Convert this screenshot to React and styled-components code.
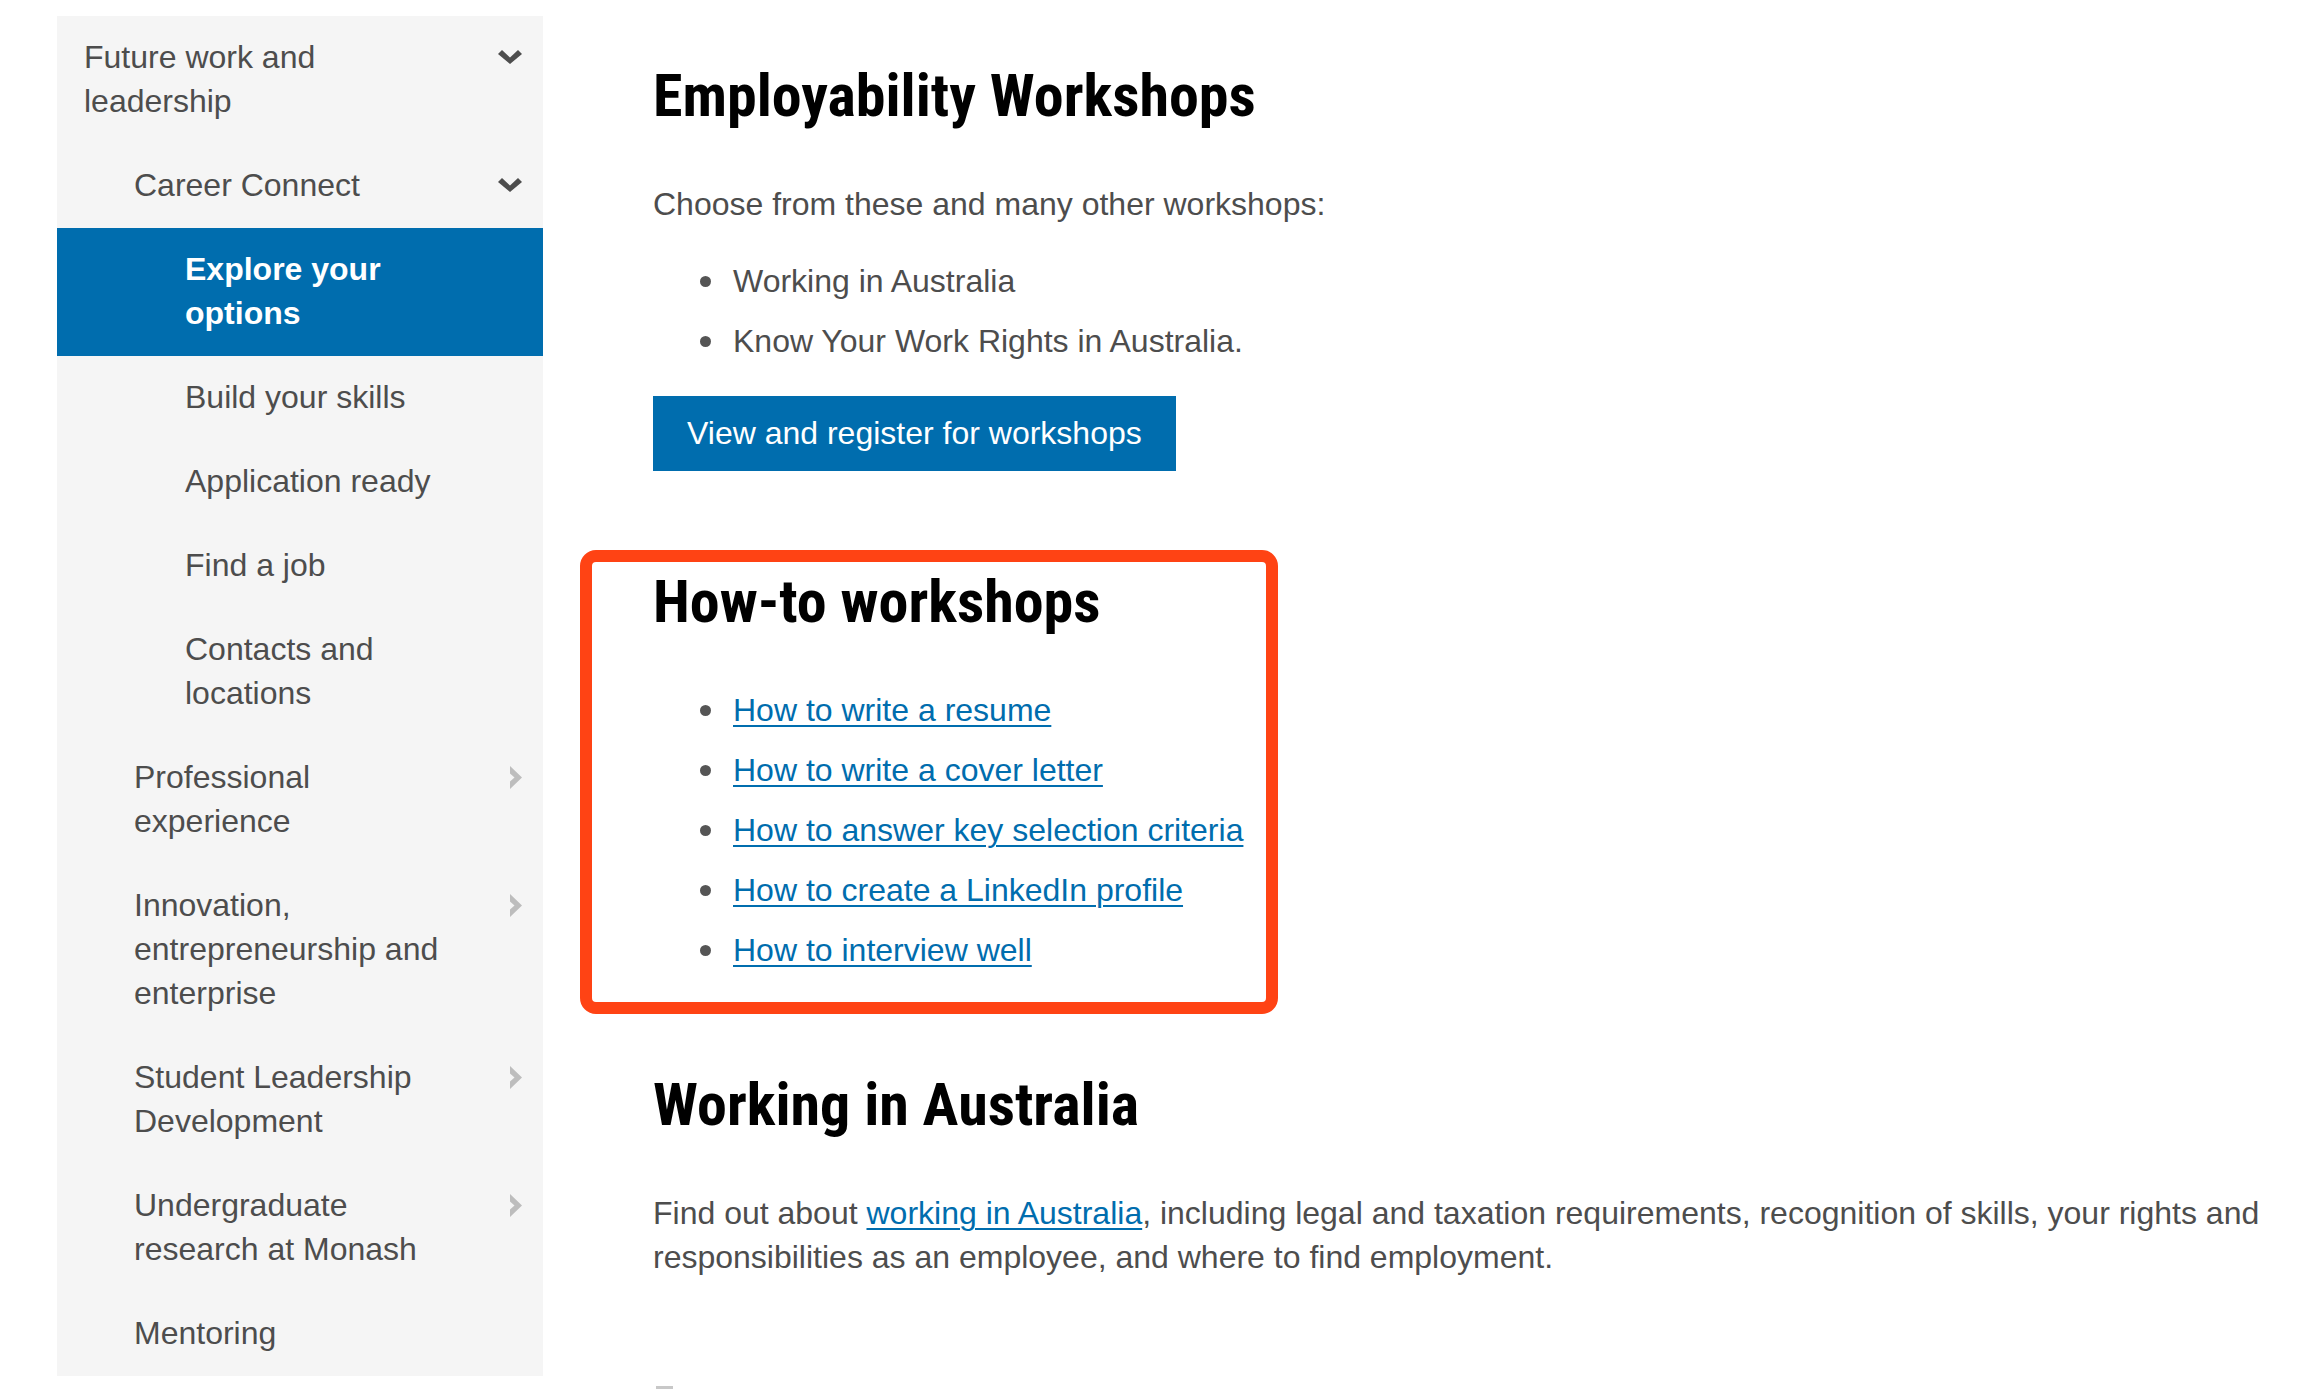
import React from 'react'
import styled, { createGlobalStyle } from 'styled-components'

const GlobalStyle = createGlobalStyle`
  html, body {
    margin: 0;
    padding: 0;
    background: #fff;
  }
  body {
    font-family: 'Liberation Sans', Arial, Helvetica, sans-serif;
    color: #4d4d4d;
  }
`

const Page = styled.div`
  display: flex;
  align-items: flex-start;
  padding: 16px 0 0 57px;
`

const Sidebar = styled.nav`
  width: 486px;
  flex: none;
  background: #f5f5f5;
`

const NavItem = styled.a`
  display: flex;
  align-items: flex-start;
  padding: 19px 21px 21px ${p => p.indent}px;
  font-size: 32px;
  line-height: 44px;
  text-decoration: none;
  cursor: pointer;
  color: ${p => (p.active ? '#fff' : '#4d4d4d')};
  background: ${p => (p.active ? '#006dae' : 'transparent')};
  font-weight: ${p => (p.active ? 700 : 400)};
`

const NavLabel = styled.span`
  flex: 1;
`

const Toggle = styled.span`
  width: 70px;
  height: 44px;
  flex: none;
  display: flex;
  align-items: center;
  justify-content: flex-end;
`

const Main = styled.main`
  flex: 1;
  padding: 0 40px 0 110px;
`

const Heading = styled.h2`
  margin: ${p => p.top || 0}px 0 48px;
  font-family: 'Roboto Condensed', 'Liberation Sans Narrow', 'DejaVu Sans Condensed', sans-serif;
  font-weight: 700;
  font-size: 60px;
  line-height: 76px;
  color: #000;
`

const Text = styled.p`
  margin: 0 0 33px;
  font-size: 32px;
  line-height: 44px;
  color: #4d4d4d;
`

const List = styled.ul`
  list-style: none;
  margin: 0 0 ${p => p.bottom}px;
  padding: 0 0 0 47px;
  display: flex;
  flex-direction: column;
  gap: 16px;
`

const Item = styled.li`
  display: flex;
  font-size: 32px;
  line-height: 44px;
  color: #4d4d4d;

  &::before {
    content: '';
    flex: none;
    width: 11px;
    height: 11px;
    margin: 17px 22px 0 0;
    border-radius: 50%;
    background: #555;
  }
`

const Link = styled.a`
  color: #006dae;
  text-decoration: underline;
  text-decoration-thickness: 2px;
  text-underline-offset: 4px;
  cursor: pointer;
`

const Button = styled.a`
  display: inline-block;
  height: 75px;
  padding: 0 34px;
  background: #006dae;
  color: #fff;
  font-size: 32px;
  line-height: 75px;
  text-decoration: none;
  cursor: pointer;
`

const Highlighted = styled.section`
  position: relative;
  margin-top: 93px;

  &::after {
    content: '';
    position: absolute;
    top: -14px;
    left: -73px;
    bottom: -42px;
    width: 698px;
    box-sizing: border-box;
    border: 12px solid #ff4314;
    border-radius: 16px;
    pointer-events: none;
  }
`

const Stub = styled.div`
  width: 17px;
  height: 3px;
  margin-top: 107px;
  margin-left: 3px;
  background: #c8c8c8;
`

const ChevronDown = () => (
  <svg width="24" height="14" viewBox="0 0 24 14">
    <polygon points="0,4 4,0 12,7.5 20,0 24,4 12,14" fill="#4d4d4d" />
  </svg>
)

const ChevronRight = () => (
  <svg width="12" height="23" viewBox="0 0 12 23">
    <polygon points="0,0 12,11.5 0,23 0,15.5 4.5,11.5 0,7.5" fill="#bdbdbd" />
  </svg>
)

const navItems = [
  { label: 'Future work and leadership', level: 0, toggle: 'down' },
  { label: 'Career Connect', level: 1, toggle: 'down' },
  { label: 'Explore your options', level: 2, active: true },
  { label: 'Build your skills', level: 2 },
  { label: 'Application ready', level: 2 },
  { label: 'Find a job', level: 2 },
  { label: 'Contacts and locations', level: 2 },
  { label: 'Professional experience', level: 1, toggle: 'right' },
  { label: 'Innovation, entrepreneurship and enterprise', level: 1, toggle: 'right' },
  { label: 'Student Leadership Development', level: 1, toggle: 'right' },
  { label: 'Undergraduate research at Monash', level: 1, toggle: 'right' },
  { label: 'Mentoring', level: 1 },
]

const indents = [27, 77, 128]

const howTo = [
  'How to write a resume',
  'How to write a cover letter',
  'How to answer key selection criteria',
  'How to create a LinkedIn profile',
  'How to interview well',
]

export default function App() {
  return (
    <>
      <GlobalStyle />
      <Page>
        <Sidebar>
          {navItems.map(item => (
            <NavItem key={item.label} indent={indents[item.level]} active={item.active}>
              <NavLabel>{item.label}</NavLabel>
              <Toggle>
                {item.toggle === 'down' && <ChevronDown />}
                {item.toggle === 'right' && <ChevronRight />}
              </Toggle>
            </NavItem>
          ))}
        </Sidebar>

        <Main>
          <Heading as="h1" top={42}>Employability Workshops</Heading>
          <Text>Choose from these and many other workshops:</Text>
          <List bottom={33}>
            <Item>Working in Australia</Item>
            <Item>Know Your Work Rights in Australia.</Item>
          </List>
          <Button>View and register for workshops</Button>

          <Highlighted>
            <Heading>How-to workshops</Heading>
            <List bottom={0}>
              {howTo.map(t => (
                <Item key={t}><Link>{t}</Link></Item>
              ))}
            </List>
          </Highlighted>

          <Heading top={95}>Working in Australia</Heading>
          <Text>
            Find out about <Link>working in Australia</Link>, including legal and taxation
            requirements, recognition of skills, your rights and responsibilities as an
            employee, and where to find employment.
          </Text>
          <Stub />
        </Main>
      </Page>
    </>
  )
}
